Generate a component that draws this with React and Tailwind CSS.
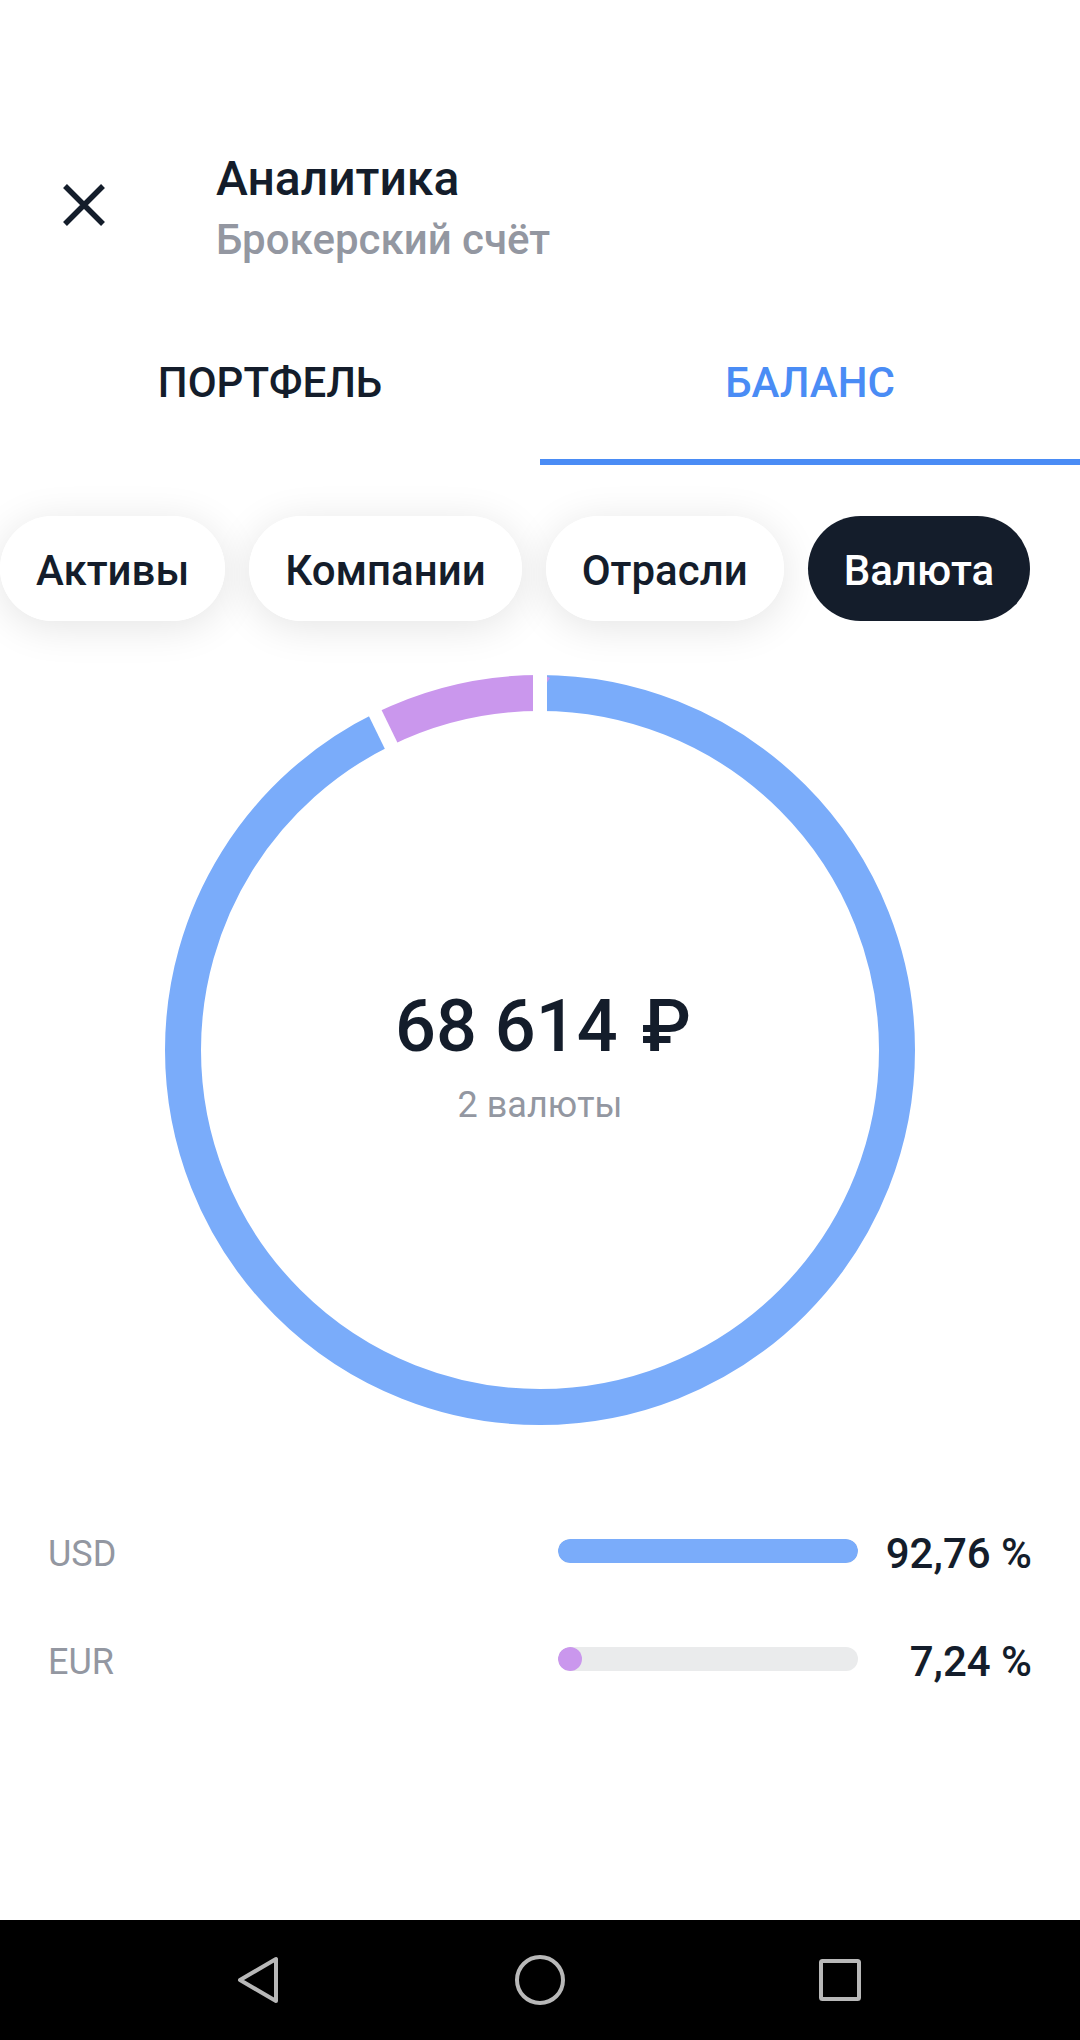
import { useState } from "react";

const tabs = ["Портфель", "Баланс"];
const filters = ["Активы", "Компании", "Отрасли", "Валюта"];

const currencies = [
  { code: "USD", share: 92.76, color: "#7aacfa" },
  { code: "EUR", share: 7.24, color: "#ca97ed" },
];

// bars are drawn relative to the largest share
const maxShare = Math.max(...currencies.map((c) => c.share));

const formatShare = (share) => `${share.toFixed(2).replace(".", ",")} %`;

function Donut({ items }) {
  const radius = 357;
  let start = 0;
  const segments = items.map((item) => {
    const segment = { ...item, start };
    start += item.share;
    return segment;
  });

  return (
    <svg viewBox="0 0 750 750" className="w-full [grid-area:1/1]" aria-hidden="true">
      <g transform="rotate(-90 375 375)">
        {segments.map((s) => (
          <circle
            key={s.code}
            cx="375"
            cy="375"
            r={radius}
            fill="none"
            stroke={s.color}
            strokeWidth="36"
            pathLength="100"
            strokeDasharray={`${s.share} ${100 - s.share}`}
            strokeDashoffset={-s.start}
          />
        ))}
        {/* gaps between segments */}
        {segments.map((s) => (
          <path
            key={s.code}
            d="M705 375H760"
            stroke="#fff"
            strokeWidth="14"
            transform={`rotate(${s.start * 3.6} 375 375)`}
          />
        ))}
      </g>
    </svg>
  );
}

function Header() {
  return (
    <header className="flex h-[306px] items-center gap-24 px-12 pt-[104px]">
      <button type="button" aria-label="Закрыть" className="flex size-[72px] items-center justify-center">
        <svg viewBox="0 0 44 44" className="size-11" fill="none" stroke="currentColor" strokeWidth="5.5">
          <path d="M3 3L41 41M41 3L3 41" />
        </svg>
      </button>
      <div className="flex flex-col gap-2 pt-1.5">
        <h1 className="text-[48px] leading-[56px] font-medium">Аналитика</h1>
        <p className="text-[42px] leading-[50px] font-medium text-[#9397a1]">Брокерский счёт</p>
      </div>
    </header>
  );
}

function Navigation() {
  return (
    <nav className="mt-auto grid h-[120px] grid-cols-3 items-center justify-items-center bg-black px-[90px] text-[#b8b8b8]">
      <button type="button" aria-label="Назад">
        <svg viewBox="0 0 96 96" className="size-24" fill="none" stroke="currentColor" strokeWidth="4" strokeLinejoin="round">
          <path d="M48 48L84 27V69Z" />
        </svg>
      </button>
      <button type="button" aria-label="Домой">
        <svg viewBox="0 0 96 96" className="size-24" fill="none" stroke="currentColor" strokeWidth="4">
          <circle cx="48" cy="48" r="23" />
        </svg>
      </button>
      <button type="button" aria-label="Недавние">
        <svg viewBox="0 0 96 96" className="size-24" fill="none" stroke="currentColor" strokeWidth="4">
          <rect x="29" y="29" width="38" height="38" rx="1.5" />
        </svg>
      </button>
    </nav>
  );
}

export default function App() {
  const [tab, setTab] = useState("Баланс");
  const [filter, setFilter] = useState("Валюта");

  return (
    <div className="flex min-h-screen flex-col bg-white font-[Roboto,sans-serif] text-[#141d2b]">
      <Header />

      <div className="grid grid-cols-2">
        {tabs.map((name) => (
          <button
            key={name}
            type="button"
            onClick={() => setTab(name)}
            className={`h-[159px] border-b-6 text-[42px] leading-[48px] font-medium uppercase ${
              tab === name ? "border-[#4a8cf5] text-[#4a8cf5]" : "border-transparent"
            }`}
          >
            {name}
          </button>
        ))}
      </div>

      <div className="isolate flex gap-6 overflow-x-auto pt-[51px] pr-12 pb-[54px]">
        {filters.map((name) => (
          <button
            key={name}
            type="button"
            onClick={() => setFilter(name)}
            className={`relative h-[105px] shrink-0 rounded-full px-9 pt-1 text-[42px] leading-[48px] font-medium ${
              filter === name
                ? "bg-[#141d2b] text-white"
                : "bg-white before:absolute before:inset-0 before:-z-10 before:rounded-full before:shadow-[0_6px_42px_rgba(0,0,0,0.11)]"
            }`}
          >
            {name}
          </button>
        ))}
      </div>

      <main>
        <div className="mx-auto grid max-w-[750px] place-items-center">
          <Donut items={currencies} />
          <div className="flex flex-col items-center gap-3 pt-3.5 [grid-area:1/1]">
            <p className="pl-1.5 text-[72px] leading-[84px] font-medium">
              68 614 <span className="ml-1.5">₽</span>
            </p>
            <p className="text-[36px] leading-[48px] text-[#9397a1]">2 валюты</p>
          </div>
        </div>

        <ul className="flex flex-col gap-[60px] px-12 pt-[105px] pb-[60px]">
          {currencies.map((c) => (
            <li key={c.code} className="flex items-center gap-6 leading-[48px]">
              <span className="flex-1 text-[36px] text-[#9397a1]">{c.code}</span>
              <div className="mb-1.5 h-6 w-[300px] overflow-hidden rounded-full bg-[#eaebec]">
                <div
                  className="h-full min-w-6 rounded-full"
                  style={{ width: `${(c.share / maxShare) * 100}%`, backgroundColor: c.color }}
                />
              </div>
              <span className="w-[150px] text-right text-[42px] font-medium whitespace-nowrap">
                {formatShare(c.share)}
              </span>
            </li>
          ))}
        </ul>
      </main>

      <Navigation />
    </div>
  );
}
